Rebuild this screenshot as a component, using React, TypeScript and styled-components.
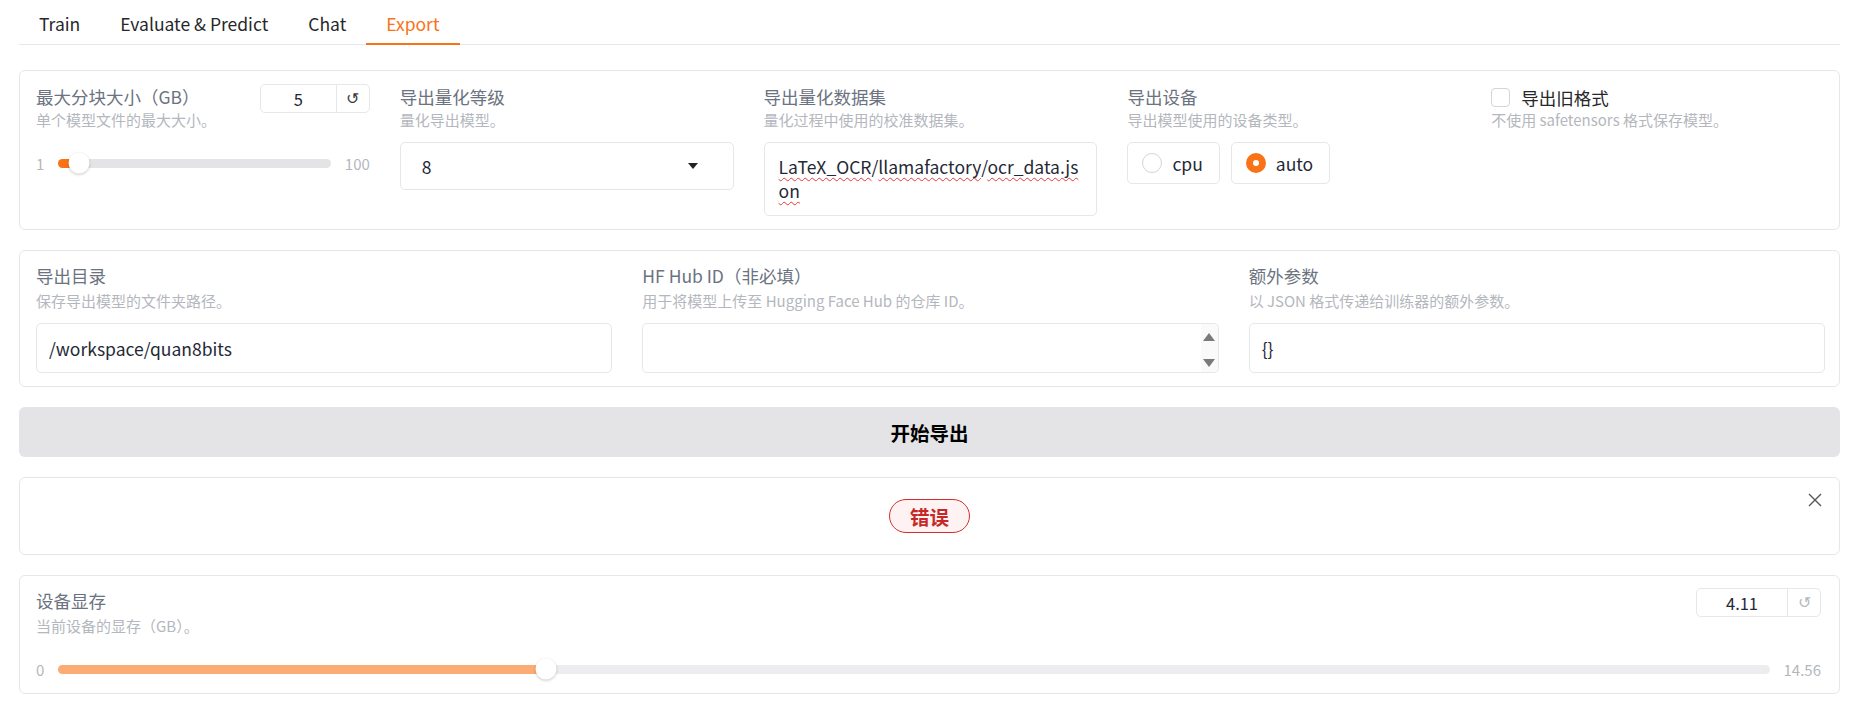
import React from "react";
import styled, { createGlobalStyle } from "styled-components";

const GlobalStyle = createGlobalStyle`
  html, body { margin: 0; padding: 0; background: #fff; }
  body {
    font-family: "Noto Sans CJK SC", "Noto Sans", sans-serif;
    color: #1f2937;
  }
  * { box-sizing: border-box; }
`;

const Page = styled.div`
  padding: 0 22px 20px 19px;
  display: flex;
  flex-direction: column;
  gap: 20px;
`;

const TabBar = styled.div`
  display: flex;
  height: 45px;
  border-bottom: 1px solid #e5e7eb;
  margin-bottom: 5px;
`;

const Tab = styled.div<{ $active?: boolean }>`
  height: 45px;
  display: flex;
  align-items: center;
  padding: 4px 20px 0;
  font-size: 17.5px;
  color: ${(p) => (p.$active ? "#f97316" : "#27272a")};
  border-bottom: 2px solid ${(p) => (p.$active ? "#f97316" : "transparent")};
`;

const Panel = styled.div<{ $cols: number }>`
  border: 1px solid #e5e7eb;
  border-radius: 6px;
  display: grid;
  grid-template-columns: repeat(${(p) => p.$cols}, 1fr);
`;

const Cell = styled.div<{ $pt?: number; $pr?: number }>`
  padding: ${(p) => p.$pt ?? 12}px ${(p) => p.$pr ?? 14}px 13px 16px;
  min-width: 0;
`;

const Head = styled.div`
  display: flex;
  justify-content: space-between;
  align-items: flex-start;
`;

const Label = styled.div`
  font-size: 17.5px;
  line-height: 26px;
  color: #6b7280;
  white-space: nowrap;
`;

const Info = styled.div<{ $mt?: number }>`
  margin-top: ${(p) => p.$mt ?? 0}px;
  font-size: 15px;
  line-height: 20px;
  color: #b4b7be;
  white-space: nowrap;
`;

const NumBox = styled.div<{ $w: number }>`
  display: flex;
  flex-shrink: 0;
  width: ${(p) => p.$w}px;
  height: 29px;
  border: 1px solid #e5e7eb;
  border-radius: 5px;
`;

const NumValue = styled.div`
  flex: 1;
  display: flex;
  align-items: center;
  justify-content: center;
  font-size: 16.5px;
  color: #1f2937;
  border-right: 1px solid #e5e7eb;
`;

const ResetBtn = styled.div<{ $dim?: boolean }>`
  width: 32px;
  display: flex;
  align-items: center;
  justify-content: center;
  font-family: "DejaVu Sans", sans-serif;
  font-size: 16px;
  font-weight: 300;
  color: ${(p) => (p.$dim ? "#b8b8bd" : "#3a3a3a")};
`;

const SliderRow = styled.div`
  display: flex;
  align-items: center;
  gap: 14px;
  height: 22px;
  margin-top: 22px;
`;

const Bound = styled.span`
  font-size: 15px;
  color: #b4b7be;
`;

const Track = styled.div<{ $dim?: boolean }>`
  position: relative;
  flex: 1;
  height: 9px;
  border-radius: 5px;
  background: ${(p) => (p.$dim ? "#ededef" : "#e4e4e7")};
`;

const Fill = styled.div<{ $dim?: boolean }>`
  height: 100%;
  border-radius: 5px;
  background: ${(p) => (p.$dim ? "#fbab73" : "#f97316")};
`;

const Thumb = styled.div`
  position: absolute;
  top: 50%;
  width: 21px;
  height: 21px;
  border-radius: 50%;
  background: #fff;
  box-shadow: 0 1px 3px rgba(0, 0, 0, 0.22);
  transform: translate(-50%, -50%);
`;

const Select = styled.div`
  margin-top: 12px;
  height: 48px;
  border: 1px solid #e5e7eb;
  border-radius: 5px;
  display: flex;
  align-items: center;
  justify-content: space-between;
  padding: 0 35px 0 21px;
  font-size: 17.5px;
`;

const Caret = styled.span`
  width: 0;
  height: 0;
  border-left: 5px solid transparent;
  border-right: 5px solid transparent;
  border-top: 6px solid #222;
`;

const TextArea = styled.div`
  margin-top: 12px;
  min-height: 72px;
  border: 1px solid #e5e7eb;
  border-radius: 5px;
  padding: 12px 14px;
  font-size: 17.5px;
  line-height: 24px;
  color: #1f2937;
  white-space: nowrap;
`;

const Misspelled = styled.span`
  text-decoration: underline wavy #e53935;
  text-decoration-thickness: 1px;
  text-underline-offset: 3px;
  text-decoration-skip-ink: none;
`;

const RadioRow = styled.div`
  display: flex;
  gap: 11px;
  margin-top: 12px;
`;

const RadioOpt = styled.div`
  height: 42px;
  border: 1px solid #e5e7eb;
  border-radius: 5px;
  display: flex;
  align-items: center;
  gap: 10px;
  padding: 0 16px 0 14px;
  font-size: 17.5px;
  color: #1f2937;
`;

const RadioDot = styled.span<{ $on?: boolean }>`
  width: 20px;
  height: 20px;
  border-radius: 50%;
  background: #fff;
  border: ${(p) => (p.$on ? "7px solid #f97316" : "1px solid #d4d4d8")};
`;

const CheckRow = styled.div`
  display: flex;
  align-items: center;
  gap: 11px;
  height: 26px;
`;

const CheckBox = styled.span`
  width: 19px;
  height: 19px;
  border: 1px solid #d4d4d8;
  border-radius: 4px;
`;

const CheckLabel = styled.span`
  font-size: 17.5px;
  color: #27272a;
`;

const TextInput = styled.div<{ $scroll?: boolean }>`
  margin-top: 12px;
  height: 50px;
  border: 1px solid #e5e7eb;
  border-radius: 5px;
  display: flex;
  align-items: center;
  padding: 0 ${(p) => (p.$scroll ? 0 : 12)}px 0 12px;
  font-size: 17.5px;
  color: #1f2937;
`;

const ScrollStrip = styled.div`
  margin-left: auto;
  width: 17px;
  height: 100%;
  background: #fafafa;
  display: flex;
  flex-direction: column;
  justify-content: space-between;
  align-items: center;
  padding: 9px 0 5px;
  border-radius: 0 5px 5px 0;
`;

const Arrow = styled.span<{ $down?: boolean }>`
  width: 0;
  height: 0;
  border-left: 6px solid transparent;
  border-right: 6px solid transparent;
  ${(p) => (p.$down ? "border-top" : "border-bottom")}: 8px solid #7a7a7a;
`;

const ExportButton = styled.button`
  height: 50px;
  width: 100%;
  border: none;
  border-radius: 6px;
  background: #e4e4e7;
  font-family: inherit;
  font-size: 19.5px;
  font-weight: 700;
  color: #000;
`;

const ErrorPanel = styled.div`
  position: relative;
  height: 78px;
  border: 1px solid #e5e7eb;
  border-radius: 6px;
  display: flex;
  align-items: center;
  justify-content: center;
`;

const Badge = styled.span`
  height: 34px;
  padding: 0 20px;
  border: 1px solid #d32f2f;
  border-radius: 17px;
  background: #fef2f2;
  color: #c62828;
  font-size: 19.5px;
  font-weight: 700;
  display: flex;
  align-items: center;
`;

const Close = styled.span`
  position: absolute;
  top: 15px;
  right: 17px;
  display: flex;
`;

type SliderProps = { min: number; max: number; value: number; dim?: boolean };

const Slider = ({ min, max, value, dim }: SliderProps) => {
  const pct = (value - min) / (max - min);
  const pos = `calc(${pct} * (100% - 21px) + 10.5px)`;
  return (
    <SliderRow>
      <Bound>{min}</Bound>
      <Track $dim={dim}>
        <Fill $dim={dim} style={{ width: pos }} />
        <Thumb style={{ left: pos }} />
      </Track>
      <Bound>{max}</Bound>
    </SliderRow>
  );
};

const App = () => (
  <>
    <GlobalStyle />
    <Page>
      <TabBar>
        <Tab>Train</Tab>
        <Tab>Evaluate &amp; Predict</Tab>
        <Tab>Chat</Tab>
        <Tab $active>Export</Tab>
      </TabBar>

      <Panel $cols={5}>
        <Cell $pt={13}>
          <Head>
            <div>
              <Label>最大分块大小（GB）</Label>
              <Info>单个模型文件的最大大小。</Info>
            </div>
            <NumBox $w={110}>
              <NumValue>5</NumValue>
              <ResetBtn>↺</ResetBtn>
            </NumBox>
          </Head>
          <Slider min={1} max={100} value={5} />
        </Cell>
        <Cell $pt={13}>
          <Label>导出量化等级</Label>
          <Info>量化导出模型。</Info>
          <Select>
            <span>8</span>
            <Caret />
          </Select>
        </Cell>
        <Cell $pt={13}>
          <Label>导出量化数据集</Label>
          <Info>量化过程中使用的校准数据集。</Info>
          <TextArea>
            <Misspelled>LaTeX_OCR</Misspelled>/<Misspelled>llamafactory</Misspelled>/
            <Misspelled>ocr_data.js</Misspelled>
            <br />
            <Misspelled>on</Misspelled>
          </TextArea>
        </Cell>
        <Cell $pt={13}>
          <Label>导出设备</Label>
          <Info>导出模型使用的设备类型。</Info>
          <RadioRow>
            <RadioOpt>
              <RadioDot />
              cpu
            </RadioOpt>
            <RadioOpt>
              <RadioDot $on />
              auto
            </RadioOpt>
          </RadioRow>
        </Cell>
        <Cell $pt={13}>
          <CheckRow>
            <CheckBox />
            <CheckLabel>导出旧格式</CheckLabel>
          </CheckRow>
          <Info>不使用 safetensors 格式保存模型。</Info>
        </Cell>
      </Panel>

      <Panel $cols={3}>
        <Cell $pt={12}>
          <Label>导出目录</Label>
          <Info $mt={2}>保存导出模型的文件夹路径。</Info>
          <TextInput>/workspace/quan8bits</TextInput>
        </Cell>
        <Cell $pt={12}>
          <Label>HF Hub ID（非必填）</Label>
          <Info $mt={2}>用于将模型上传至 Hugging Face Hub 的仓库 ID。</Info>
          <TextInput $scroll>
            <ScrollStrip>
              <Arrow />
              <Arrow $down />
            </ScrollStrip>
          </TextInput>
        </Cell>
        <Cell $pt={12}>
          <Label>额外参数</Label>
          <Info $mt={2}>以 JSON 格式传递给训练器的额外参数。</Info>
          <TextInput>{"{}"}</TextInput>
        </Cell>
      </Panel>

      <ExportButton>开始导出</ExportButton>

      <ErrorPanel>
        <Badge>错误</Badge>
        <Close>
          <svg width="14" height="14" viewBox="0 0 14 14">
            <path d="M1 1 L13 13 M13 1 L1 13" stroke="#555" strokeWidth="1.4" fill="none" />
          </svg>
        </Close>
      </ErrorPanel>

      <Panel $cols={1}>
        <Cell $pt={12} $pr={18}>
          <Head>
            <div>
              <Label>设备显存</Label>
              <Info $mt={2}>当前设备的显存（GB）。</Info>
            </div>
            <NumBox $w={125}>
              <NumValue>4.11</NumValue>
              <ResetBtn $dim>↺</ResetBtn>
            </NumBox>
          </Head>
          <Slider min={0} max={14.56} value={4.11} dim />
        </Cell>
      </Panel>
    </Page>
  </>
);

export default App;
